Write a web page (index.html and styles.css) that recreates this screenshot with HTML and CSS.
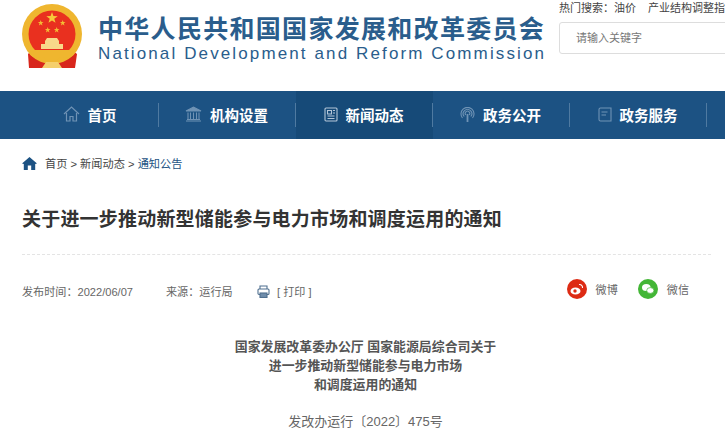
FILE: index.html
```html
<!DOCTYPE html>
<html lang="zh-CN">
  <head>
    <meta charset="UTF-8" />
    <title>关于进一步推动新型储能参与电力市场和调度运用的通知</title>
    <link rel="stylesheet" href="styles.css">
  </head>
  <body>
    <header class="top">
      <svg class="emblem" width="62" height="66" viewBox="0 0 62 66">
        <defs>
          <polygon id="star" points="0,-1 .235,-.324 .951,-.309 .38,.124 .588,.809 0,.4 -.588,.809 -.38,.124 -.951,-.309 -.235,-.324"/>
        </defs>
        <path d="M11 46 L7 50 L8 64 L24 64 L31 59 L38 64 L54 64 L56 50 L51 46 Z" fill="#d8261c"/>
        <circle cx="31" cy="30" r="30" fill="#efb62f"/>
        <circle cx="31" cy="30" r="23.500" fill="#e9301f"/>
        <use href="#star" fill="#f7c93b" transform="translate(31 14) scale(6)"/>
        <use href="#star" fill="#f3bc35" transform="translate(19.700 19) scale(3)"/>
        <use href="#star" fill="#f3bc35" transform="translate(41.700 19) scale(3)"/>
        <use href="#star" fill="#f3bc35" transform="translate(26.700 26) scale(3)"/>
        <use href="#star" fill="#f3bc35" transform="translate(35.700 26) scale(3)"/>
        <path d="M24 37 L26 34 H36 L38 37 V40 H42 V45 H20 V40 H24 Z" fill="#f8d98a"/>
        <path d="M8 46 H54 V49 C50 56 44 53 41 53 C38 53 36 58 31 58 C26 58 24 53 21 53 C18 53 12 56 8 49 Z" fill="#efb62f"/>
        <path d="M21 64 L25 58 H37 L41 64 Z" fill="#f5cf6b"/>
      </svg>
      <div class="brand">
        <div class="brand-cn">中华人民共和国国家发展和改革委员会</div>
        <div class="brand-en">National Development and Reform Commission</div>
      </div>
      <div class="search-area">
        <div class="hot">热门搜索：<span>油价</span><span>产业结构调整指导目录</span></div>
        <div class="search-box">请输入关键字</div>
      </div>
    </header>

    <nav class="nav">
      <a class="nav-item">
        <svg width="17" height="16" viewBox="0 0 17 16" fill="none" stroke="#6f93b5" stroke-width="1.2"><path d="M1 8 L8.500 1 L16 8"/><path d="M3.500 7 V15 H7 V10.500 H10 V15 H13.500 V7"/></svg>
        首页
      </a>
      <a class="nav-item">
        <svg width="17" height="16" viewBox="0 0 17 16" fill="none" stroke="#6f93b5" stroke-width="1.1"><path d="M1 5 L8.500 1 L16 5 Z" fill="#6f93b5"/><path d="M3 6.500 V13 M5.500 6.500 V13 M8.500 6.500 V13 M11.500 6.500 V13 M14 6.500 V13"/><path d="M1 15 H16 M2 13.500 H15"/></svg>
        机构设置
      </a>
      <a class="nav-item active">
        <svg width="14" height="15" viewBox="0 0 14 15" fill="none" stroke="#b4c6d8" stroke-width="1.1"><rect x="1" y="1" width="12" height="13" rx="1"/><path d="M3.500 3.500 H7.500 V7 H3.500 Z M9 3.500 H11 M9 6 H11 M3.500 9 H10.500 M3.500 11.500 H10.500"/></svg>
        新闻动态
      </a>
      <a class="nav-item">
        <svg width="15" height="15" viewBox="0 0 15 15" fill="none" stroke="#6f93b5" stroke-width="1.1"><path d="M2.500 11 A6.500 6.500 0 1 1 12.500 11"/><path d="M4.200 9.500 A4.300 4.300 0 1 1 10.800 9.500"/><path d="M5.800 8 A2.300 2.300 0 1 1 9.200 8"/><path d="M7.500 7 V15" stroke-width="1.800"/></svg>
        政务公开
      </a>
      <a class="nav-item">
        <svg width="14" height="15" viewBox="0 0 14 15" fill="none" stroke="#6f93b5" stroke-width="1.1"><path d="M2.500 1 H13 V14 H2.500 C1.500 14 1 13.500 1 12.500 V2.500 C1 1.500 1.500 1 2.500 1 Z"/><path d="M3.500 5 H9.500 M3.500 8 H8"/></svg>
        政务服务
      </a>
    </nav>

    <main class="content">
      <div class="crumbs">
        <svg width="15" height="13" viewBox="0 0 15 13"><path d="M7.500 0 L15 6.500 L13.200 6.900 V13 H9.200 V8.500 H5.800 V13 H1.800 V6.900 L0 6.500 Z" fill="#1c5283"/></svg>
        <span>首页 &gt; 新闻动态 &gt; <b>通知公告</b></span>
      </div>
      <h1 class="title">关于进一步推动新型储能参与电力市场和调度运用的通知</h1>
      <div class="meta">
        <div class="meta-left">
          <span class="date">发布时间：2022/06/07</span>
          <span class="source">来源：运行局</span>
          <span class="print">
            <svg width="13" height="13" viewBox="0 0 13 13" fill="none" stroke="#4f6f8f" stroke-width="1.1"><path d="M3 4 V1 H10 V4"/><rect x="1" y="4" width="11" height="5.500" rx="1"/><rect x="3" y="8" width="7" height="4.500" fill="#6f8dab"/></svg>
            [ 打印 ]
          </span>
        </div>
        <div class="share">
          <span class="share-item">
            <svg width="20" height="20" viewBox="0 0 20 20"><circle cx="10" cy="10" r="10" fill="#dd2b14"/><ellipse cx="8.500" cy="12" rx="5" ry="3.600" fill="#fff"/><circle cx="8" cy="12" r="1.700" fill="#dd2b14"/><path d="M12 5.500 A3 3 0 0 1 15.500 9" stroke="#fff" fill="none" stroke-width="1.100"/></svg>
            微博
          </span>
          <span class="share-item">
            <svg width="20" height="20" viewBox="0 0 20 20"><circle cx="10" cy="10" r="10" fill="#43b636"/><ellipse cx="8.300" cy="8.500" rx="4.300" ry="3.500" fill="#fff"/><ellipse cx="12.300" cy="11.500" rx="3.600" ry="2.900" fill="#fff" stroke="#43b636" stroke-width="0.700"/></svg>
            微信
          </span>
        </div>
      </div>
      <div class="doc-head">
        <p>国家发展改革委办公厅 国家能源局综合司关于</p>
        <p>进一步推动新型储能参与电力市场</p>
        <p>和调度运用的通知</p>
      </div>
      <p class="doc-no">发改办运行〔2022〕475号</p>
    </main>
  </body>
</html>
```

FILE: styles.css
```css
* {
  margin: 0;
  padding: 0;
  box-sizing: border-box;
}
html,
body {
  height: 441px;
  overflow: hidden;
}
body {
  font-family: "Liberation Sans", "Noto Sans CJK SC", sans-serif;
  background: #fff;
  color: #333;
}
.top {
  height: 91px;
  display: flex;
  overflow: hidden;
}
.emblem {
  flex: none;
  margin: 4px 0 0 21px;
}
.brand {
  flex: none;
  width: 460px;
  margin-left: 15px;
  padding-top: 14px;
  color: #2a5d8c;
}
.brand-cn {
  font-size: 25px;
  line-height: 30px;
  font-weight: 700;
  letter-spacing: 1.3px;
  white-space: nowrap;
}
.brand-en {
  font-size: 17px;
  line-height: 19px;
  letter-spacing: 2.12px;
  white-space: nowrap;
}
.search-area {
  flex: none;
  width: 200px;
  margin-left: 1px;
}
.hot {
  font-size: 11px;
  line-height: 16px;
  white-space: nowrap;
  color: #444;
}
.hot span {
  margin-right: 12px;
}
.search-box {
  width: 190px;
  height: 32px;
  margin-top: 6px;
  padding-left: 16px;
  border: 1px solid #ddd;
  border-radius: 3px;
  font-size: 11px;
  line-height: 30px;
  color: #777;
}
.nav {
  height: 48px;
  padding-left: 22px;
  display: flex;
  background: #1c5283;
}
.nav-item {
  position: relative;
  width: 137px;
  padding: 0 2px 2px 0;
  display: flex;
  align-items: center;
  justify-content: center;
  gap: 8px;
  font-size: 14.500px;
  font-weight: 700;
  color: #fff;
}
.nav-item::after {
  content: "";
  position: absolute;
  right: 0;
  top: 12px;
  height: 24px;
  width: 1px;
  background: #4f7aa1;
}
.nav-item.active {
  background: #164a78;
}
.content {
  padding: 0 14px 0 22px;
}
.crumbs {
  display: flex;
  align-items: center;
  gap: 8px;
  height: 48px;
  font-size: 11.200px;
  color: #444;
}
.crumbs b {
  font-weight: 400;
  color: #1c5283;
}
.title {
  height: 68px;
  padding-top: 19px;
  border-bottom: 1px dashed #e4e4e4;
  font-size: 19px;
  line-height: 27px;
  font-weight: 700;
  letter-spacing: 0.2px;
  color: #333;
}
.meta {
  display: flex;
  justify-content: space-between;
  align-items: center;
  height: 72px;
  font-size: 11.100px;
  color: #666;
}
.meta-left {
  display: flex;
  align-items: center;
}
.date {
  width: 144px;
}
.source {
  width: 91px;
}
.print {
  display: flex;
  align-items: center;
  gap: 7px;
}
.share {
  display: flex;
  gap: 20px;
  padding-right: 22px;
  margin-top: -4px;
}
.share-item {
  display: flex;
  align-items: center;
  gap: 9px;
}
.doc-head {
  margin: 10px 2px 0 0;
  text-align: center;
  font-size: 12.900px;
  line-height: 19px;
  font-weight: 700;
  color: #555;
}
.doc-no {
  margin: 17px 2px 0 0;
  text-align: center;
  font-size: 13px;
  line-height: 22px;
  color: #666;
}
```
